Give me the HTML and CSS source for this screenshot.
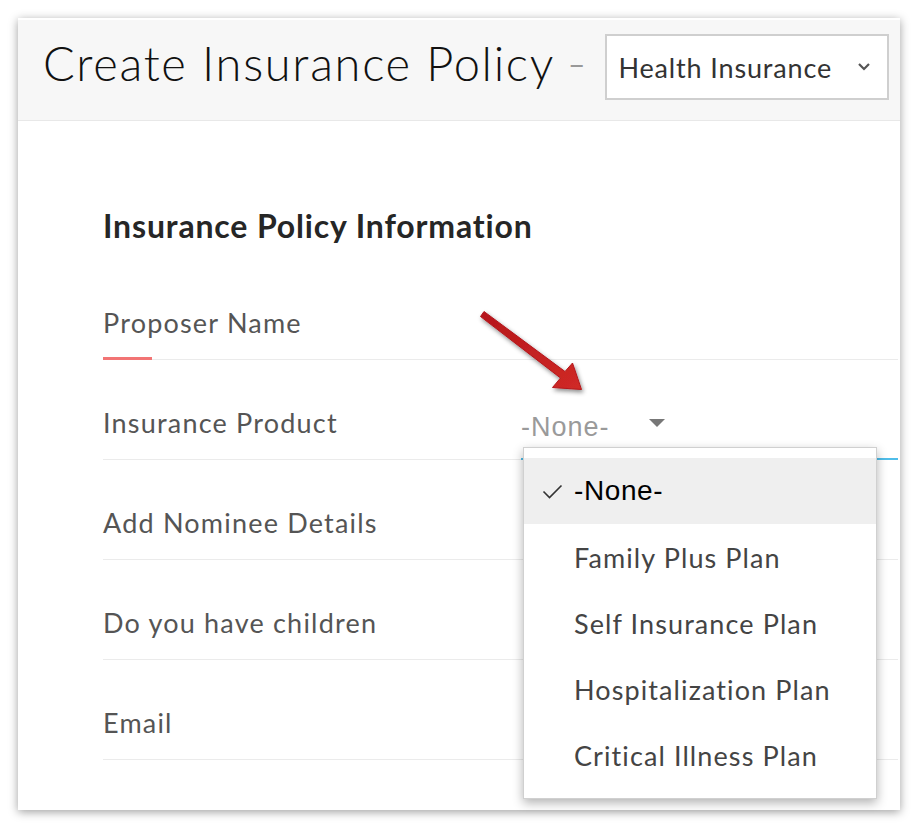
FILE: index.html
```html
<!DOCTYPE html>
<html>
<head>
<meta charset="utf-8">
<link rel="stylesheet" href="styles.css">
</head>
<body>
<div class="frame">
  <div class="card">
    <header class="head">
      <h1 class="title">Create Insurance Policy</h1>
      <span class="dash">–</span>
      <div class="layout-select">
        <span>Health Insurance</span>
        <svg class="chev" width="14" height="9" viewBox="0 0 14 9"><path d="M2 2 L7 7 L12 2" fill="none" stroke="#555" stroke-width="2.2"/></svg>
      </div>
    </header>
    <section class="body">
      <h2 class="section">Insurance Policy Information</h2>
      <div class="row">
        <div class="label active">Proposer Name</div>
        <div class="value"></div>
      </div>
      <div class="row">
        <div class="label">Insurance Product</div>
        <div class="value focus">
          <span class="placeholder">-None-</span>
          <span class="caret"></span>
          <ul class="menu">
            <li class="item selected"><svg class="check" width="21" height="15" viewBox="0 0 21 15"><path d="M1.5 7.5 L7.5 13.5 L19.5 1.5" fill="none" stroke="#333" stroke-width="1.6"/></svg><span class="opt-none">-None-</span></li>
            <li class="item">Family Plus Plan</li>
            <li class="item">Self Insurance Plan</li>
            <li class="item">Hospitalization Plan</li>
            <li class="item">Critical Illness Plan</li>
          </ul>
        </div>
      </div>
      <div class="row">
        <div class="label">Add Nominee Details</div>
        <div class="value"></div>
      </div>
      <div class="row">
        <div class="label">Do you have children</div>
        <div class="value"></div>
      </div>
      <div class="row">
        <div class="label">Email</div>
        <div class="value"></div>
      </div>
    </section>
    <svg class="arrow" width="125" height="105" viewBox="0 0 125 105">
      <defs>
        <filter id="sh" x="-20%" y="-20%" width="150%" height="150%">
          <feDropShadow dx="1.5" dy="2.5" stdDeviation="2" flood-color="#000" flood-opacity="0.45"/>
        </filter>
        <linearGradient id="rg" x1="0" y1="0" x2="1" y2="1">
          <stop offset="0" stop-color="#b5161b"/>
          <stop offset="1" stop-color="#d02a26"/>
        </linearGradient>
      </defs>
      <path d="M7.5 13.5 L11 8.5 L92 68.5 L99.5 60 L108.5 86.5 L79.5 84.5 L87.5 75 Z" fill="url(#rg)" stroke="#b3171b" stroke-width="1" stroke-linejoin="round" filter="url(#sh)"/>
    </svg>
  </div>
</div>
</body>
</html>
```

FILE: styles.css
```css
* { box-sizing: border-box; }
html, body { margin: 0; padding: 0; background: #ffffff; }
body { font-family: "Lato", "Open Sans", sans-serif; width: 918px; height: 828px; overflow: hidden; }

.frame { padding: 18px 18px 0 18px; }

.card {
  position: relative;
  width: 882px;
  height: 792px;
  background: #ffffff;
  box-shadow: 0 2px 9px rgba(0,0,0,0.38);
}

.head {
  height: 103px;
  background: #f7f7f7;
  border-top: 2px solid #ffffff;
  border-bottom: 1px solid #e8e8e8;
  display: flex;
  align-items: flex-start;
  padding-left: 25px;
}

.title {
  margin: 15px 0 0 0;
  font-size: 47px;
  font-weight: 300;
  color: #111;
  letter-spacing: 1.7px;
  line-height: 56px;
  white-space: nowrap;
}

.dash {
  font-size: 30px;
  color: #999;
  margin-left: 13px;
  margin-right: 20px;
  margin-top: 28px;
  line-height: 30px;
}

.layout-select {
  width: 287px;
  height: 66px;
  border: 2px solid #cfcfcf;
  background: #fff;
  display: flex;
  align-items: center;
  justify-content: space-between;
  padding: 0 16px 0 11px;
  font-size: 27px;
  letter-spacing: 0.85px;
  color: #333;
  margin-left: auto;
  margin-right: 11px;
  margin-top: 14px;
}

.chev { margin-top: -2px; }

.body { padding: 0 2px 0 85px; }

.section {
  margin: 0;
  padding-top: 88px;
  font-size: 32px;
  font-weight: 700;
  letter-spacing: 0.85px;
  color: #262626;
  line-height: 34px;
  height: 139px;
}

.row {
  display: flex;
  height: 100px;
  border-bottom: 1px solid #ebebeb;
}

.label {
  width: 418px;
  display: flex;
  align-items: flex-end;
  padding-bottom: 20px;
  font-size: 27px;
  letter-spacing: 1.2px;
  color: #555;
  position: relative;
  white-space: nowrap;
}

.label.active::after {
  content: "";
  position: absolute;
  left: 0;
  bottom: -1px;
  width: 49px;
  height: 3px;
  background: #f27474;
}

.value {
  flex: 1;
  position: relative;
  display: flex;
  align-items: flex-end;
  padding-bottom: 17px;
}

.value.focus {
  border-bottom: 2px solid #4fbde9;
  margin-bottom: -1px;
}

.placeholder {
  font-family: "Liberation Sans", Arial, sans-serif;
  font-size: 27px;
  letter-spacing: 1px;
  color: #9a9a9a;
  line-height: 28px;
}

.caret {
  width: 0;
  height: 0;
  border-left: 8px solid transparent;
  border-right: 8px solid transparent;
  border-top: 8px solid #777;
  margin-left: 39px;
  margin-bottom: 14px;
}

.menu {
  position: absolute;
  left: 2px;
  top: 87px;
  width: 354px;
  margin: 0;
  padding: 10px 0 10px 0;
  list-style: none;
  background: #fff;
  border: 1px solid #d0d0d0;
  box-shadow: 0 4px 10px rgba(0,0,0,0.3);
  z-index: 2;
}

.item {
  height: 66px;
  display: flex;
  align-items: center;
  padding-left: 50px;
  font-size: 27px;
  letter-spacing: 1.1px;
  color: #444;
  white-space: nowrap;
}

.item.selected {
  background: #efefef;
  padding-left: 18px;
}

.check { margin-right: 11px; }

.opt-none {
  font-family: "Liberation Sans", Arial, sans-serif;
  font-size: 28px;
  letter-spacing: 0.6px;
  color: #000;
}

.arrow {
  position: absolute;
  left: 455px;
  top: 285px;
  z-index: 3;
}
```
